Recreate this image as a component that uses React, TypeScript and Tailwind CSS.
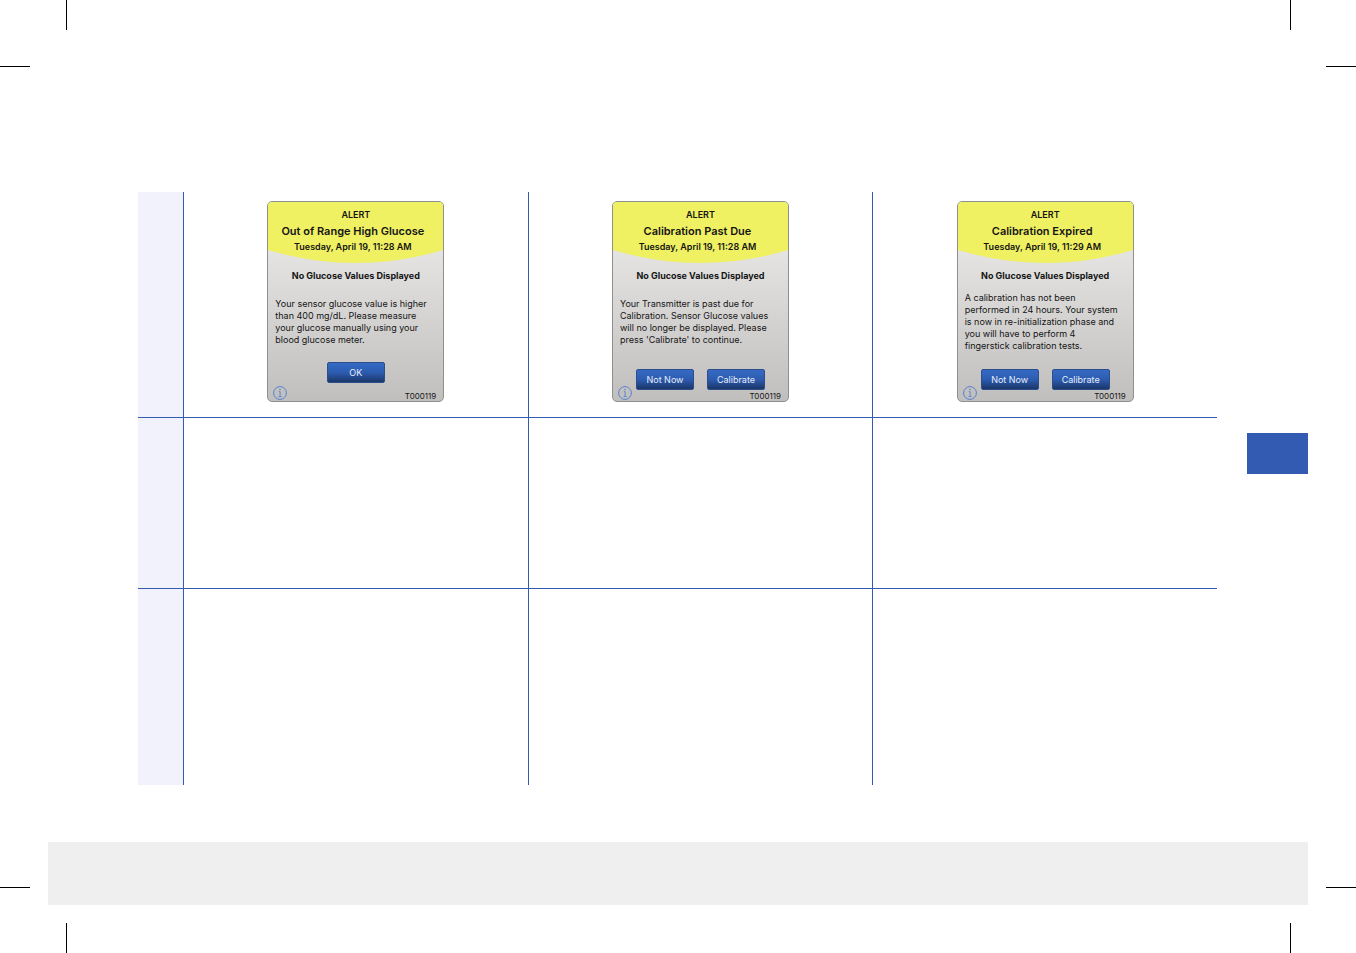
interface Alert {
  title: string
  time: string
  lines: string[]
  actions: string[]
}

const alerts: Alert[] = [
  {
    title: 'Out of Range High Glucose',
    time: 'Tuesday, April 19, 11:28 AM',
    lines: [
      'Your sensor glucose value is higher',
      'than 400 mg/dL. Please measure',
      'your glucose manually using your',
      'blood glucose meter.',
    ],
    actions: ['OK'],
  },
  {
    title: 'Calibration Past Due',
    time: 'Tuesday, April 19, 11:28 AM',
    lines: [
      'Your Transmitter is past due for',
      'Calibration. Sensor Glucose values',
      'will no longer be displayed. Please',
      "press 'Calibrate' to continue.",
    ],
    actions: ['Not Now', 'Calibrate'],
  },
  {
    title: 'Calibration Expired',
    time: 'Tuesday, April 19, 11:29 AM',
    lines: [
      'A calibration has not been',
      'performed in 24 hours. Your system',
      'is now in re-initialization phase and',
      'you will have to perform 4',
      'fingerstick calibration tests.',
    ],
    actions: ['Not Now', 'Calibrate'],
  },
]

function InfoIcon() {
  return (
    <svg viewBox="0 0 14 14" className="h-3.5 w-3.5" fill="none" stroke="#4a7bd0" aria-hidden="true">
      <circle cx="7" cy="7" r="6.4" strokeWidth="0.9" />
      <path d="M5.8 5.6H7.1V10.4M5.6 10.5H8.6" strokeWidth="0.8" />
      <circle cx="7" cy="3.5" r="0.7" fill="#4a7bd0" stroke="none" />
    </svg>
  )
}

function AlertCard({ alert }: { alert: Alert }) {
  return (
    <article className="relative mx-auto flex h-[201px] w-[177px] flex-col overflow-hidden rounded-[5px] border border-[#8f8f90] bg-linear-to-b from-[#f0f0ef] to-[#c1bfbe] text-center text-[#151515]">
      <svg viewBox="0 0 175 61" preserveAspectRatio="none" className="absolute inset-x-0 top-0 h-[61px] w-full" aria-hidden="true">
        <path d="M0 0H175V48Q132 61 87.500 61Q43 61 0 48Z" fill="#eff062" />
      </svg>
      <header className="relative flex h-[61px] flex-col gap-1 pt-[7px] leading-3 font-semibold">
        <p className="text-[9px]">ALERT</p>
        <h2 className="pr-1.5 text-[11px]">{alert.title}</h2>
        <p className="pr-1.5 text-[9px]">{alert.time}</p>
      </header>
      <h3 className="mt-[7px] text-[9px] leading-3 font-bold">No Glucose Values Displayed</h3>
      <p className="flex h-20 flex-col justify-center pl-[7px] text-left text-[9px] leading-3 whitespace-nowrap">
        {alert.lines.map(line => (
          <span key={line}>{line}</span>
        ))}
      </p>
      <div className={alert.actions.length === 1 ? 'flex justify-center' : 'mt-[7px] flex justify-center gap-[13px]'}>
        {alert.actions.map(action => (
          <button
            key={action}
            className="h-[21px] w-[58px] rounded-[2px] border border-[#2c4f8c] bg-linear-to-b from-[#356ac4] via-[#2c5cb0] to-[#1b3769] text-[9px] leading-3 text-[#e6edfa]"
          >
            {action}
          </button>
        ))}
      </div>
      <footer className="absolute inset-x-0 bottom-0 flex items-end justify-between pr-[7px] pb-px pl-[5px]">
        <button aria-label="More information">
          <InfoIcon />
        </button>
        <span className="text-[8px] leading-2">T000119</span>
      </footer>
    </article>
  )
}

// one horizontal trim mark, sits in the page margin
function TrimMark() {
  return <div className="h-px w-[30px] shrink-0 bg-black" />
}

export default function App() {
  return (
    <div className="min-h-screen bg-white font-['Inter','Liberation_Sans',sans-serif]">
      <div className="mr-[65px] ml-[66px] h-[30px] border-x border-black" />
      <div className="flex justify-between pt-9">
        <TrimMark />
        <TrimMark />
      </div>
      <main className="flex items-start gap-[30px] pt-[125px] pr-12 pl-[138px]">
        <table className="flex-1 table-fixed border-separate border-spacing-0">
          <colgroup>
            <col className="w-[45px]" />
            <col />
            <col />
            <col />
          </colgroup>
          <tbody>
            <tr className="h-[226px]">
              <th className="border-b border-[#335bb1] bg-[#f2f2fd] p-0" />
              {alerts.map(alert => (
                <td key={alert.title} className="border-b border-l border-[#335bb1] p-0 pt-[9px] align-top">
                  <AlertCard alert={alert} />
                </td>
              ))}
            </tr>
            <tr className="h-[171px]">
              <th className="border-b border-[#335bb1] bg-[#f2f2fd] p-0" />
              {alerts.map(alert => (
                <td key={alert.title} className="border-b border-l border-[#335bb1] p-0" />
              ))}
            </tr>
            <tr className="h-[196px]">
              <th className="bg-[#f2f2fd] p-0" />
              {alerts.map(alert => (
                <td key={alert.title} className="border-l border-[#335bb1] p-0" />
              ))}
            </tr>
          </tbody>
        </table>
        <aside className="mt-[241px] h-[41px] w-[61px] bg-[#335bb1]" />
      </main>
      <div className="flex items-end gap-[18px] pt-[57px]">
        <div className="pb-[17px]">
          <TrimMark />
        </div>
        <footer className="h-[63px] flex-1 bg-[#efefef]" />
        <div className="pb-[17px]">
          <TrimMark />
        </div>
      </div>
      <div className="mt-[18px] mr-[65px] ml-[66px] h-[30px] border-x border-black" />
    </div>
  )
}
